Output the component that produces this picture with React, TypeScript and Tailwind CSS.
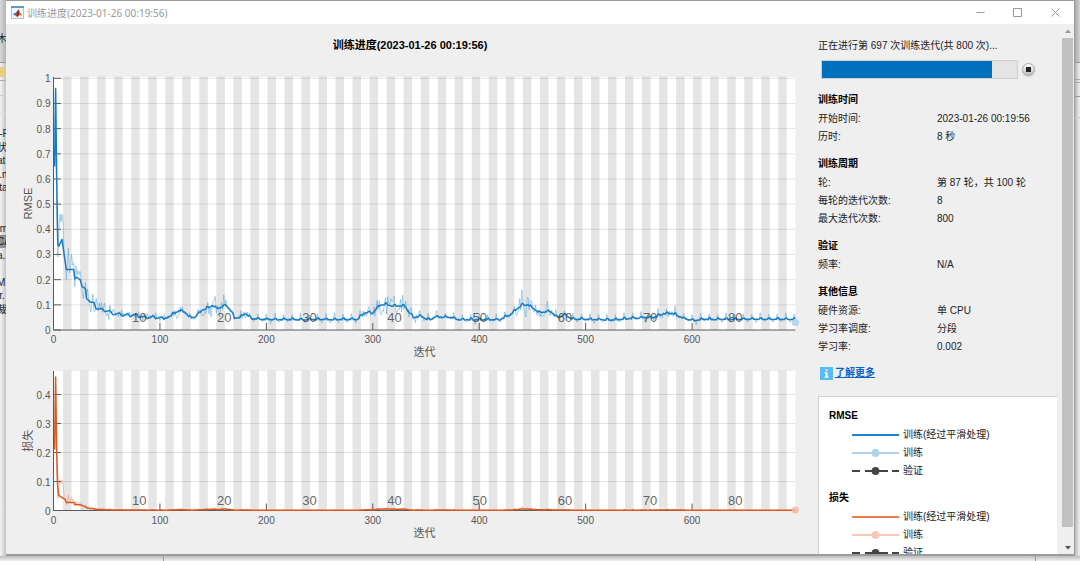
import React from 'react'

const FONT = 'font-["Liberation_Sans","Noto_Sans_CJK_SC",sans-serif]'

const ITERATIONS = 697
const MAX_ITERATIONS = 800
const EPOCH_SIZE = 8

type Key = [number, number]

// [iteration, smoothed RMSE]
const rmseKeys: Key[] = [
  [1, 0.65], [2, 0.96], [3, 0.6], [4, 0.34], [5, 0.333], [8, 0.36], [12, 0.24], [19, 0.24],
  [20, 0.203], [22, 0.21], [25, 0.2], [27, 0.172], [30, 0.165], [31, 0.125], [35, 0.11], [38, 0.11],
  [40, 0.083], [46, 0.085], [48, 0.073], [53, 0.077], [56, 0.06], [62, 0.068], [65, 0.055],
  [70, 0.065], [72, 0.053], [78, 0.065], [80, 0.05], [86, 0.055], [88, 0.045], [94, 0.057],
  [96, 0.045], [102, 0.052], [104, 0.042], [110, 0.058], [118, 0.077], [123, 0.072], [129, 0.048],
  [133, 0.052], [140, 0.08], [150, 0.098], [153, 0.084], [158, 0.092], [162, 0.099], [167, 0.075],
  [170, 0.047], [175, 0.05], [180, 0.065], [183, 0.058], [186, 0.045], [200, 0.042], [285, 0.042],
  [293, 0.07], [300, 0.068], [307, 0.1], [312, 0.103], [318, 0.095], [330, 0.096], [338, 0.05],
  [345, 0.055], [353, 0.04], [359, 0.052], [374, 0.05], [380, 0.042], [419, 0.041], [429, 0.06],
  [440, 0.1], [446, 0.1], [456, 0.07], [467, 0.074], [473, 0.05], [481, 0.06], [487, 0.044],
  [524, 0.04], [548, 0.048], [564, 0.05], [573, 0.065], [582, 0.067], [592, 0.046], [601, 0.038],
  [612, 0.043], [697, 0.043],
]

// [iteration, smoothed loss] for the first steps, later ones follow from the RMSE
const lossKeys: Key[] = [
  [1, 0.21], [2, 0.46], [3, 0.2], [4, 0.08], [5, 0.052], [8, 0.045], [11, 0.038], [12, 0.028],
  [19, 0.028], [20, 0.021], [26, 0.019], [30, 0.013], [32, 0.008], [38, 0.006], [40, 0.003],
]

const earlyRaw: Record<number, number> = {
  1: 0.65, 2: 0.96, 3: 0.5, 4: 0.29, 5: 0.38, 6: 0.46, 7: 0.43, 8: 0.46, 9: 0.43, 10: 0.3, 14: 0.325,
  17: 0.3, 21: 0.255,
}

function noise(n: number) {
  const s = Math.sin(n * 127.1 + 31.7) * 43758.5453
  return (s - Math.floor(s)) * 2 - 1
}

function interpolate(keys: Key[], iteration: number) {
  for (let k = 1; k < keys.length; k++) {
    const [x1, y1] = keys[k]
    if (iteration <= x1) {
      const [x0, y0] = keys[k - 1]
      return y0 + ((y1 - y0) * (iteration - x0)) / (x1 - x0)
    }
  }
  return keys[keys.length - 1][1]
}

const smoothed: number[] = []
const raw: number[] = []
for (let i = 1; i <= ITERATIONS; i++) {
  const base = interpolate(rmseKeys, i)
  const phase = i % EPOCH_SIZE
  const ripple = i > 104 ? (phase < 2 ? 0.005 : -0.001) + noise(i) * 0.0015 : 0
  smoothed.push(base + ripple)
  const spread = Math.min(0.04, Math.max(0.004, (base - 0.04) * 0.65))
  const spike = phase === 0 ? 0.022 : phase === 4 ? -0.01 + noise(i * 5) * 0.008 : 0
  raw.push(earlyRaw[i] ?? Math.max(0.015, base + noise(i * 3) * spread + spike))
}

const toLoss = (v: number) => (v * v) / 2
const smoothedLoss = smoothed.map((v, i) => (i < 40 ? interpolate(lossKeys, i + 1) : toLoss(v)))

type ChartProps = {
  label: string
  height: number
  top: number
  bottom: number
  unit: number
  yTicks: number[]
  line: number[]
  rawLine: number[]
  color: string
  rawColor: string
  dotColor: string
  dotY: number
  epochY: number
}

const LEFT = 47.5
const STEP = 1.0643
const RIGHT = LEFT + ITERATIONS * STEP

function Chart(props: ChartProps) {
  const { label, height, top, bottom, unit, yTicks, line, rawLine, color, rawColor, dotColor, dotY, epochY } = props
  const points = (values: number[]) =>
    values.map((v, i) => `${(LEFT + (i + 1) * STEP).toFixed(1)},${(bottom - v * unit).toFixed(1)}`).join(' ')
  const middle = (top + bottom) / 2

  return (
    <svg viewBox={`0 0 812 ${height}`} className="block h-auto w-full" role="img" aria-label={label}>
      <rect x={LEFT} y={top} width={RIGHT - LEFT} height={bottom - top} fill="#fff" />
      {Array.from({ length: 43 }, (_, k) => (
        <rect key={k} x={LEFT + (9 + 16 * k) * STEP} y={top - 1} width={8.5} height={bottom - top + 1} fill="#e5e5e5" />
      ))}
      {yTicks.filter((t) => t > 0).map((t) => (
        <line key={t} x1={LEFT} x2={RIGHT} y1={bottom - t * unit} y2={bottom - t * unit} stroke="#262626" strokeOpacity={0.12} />
      ))}
      <polyline points={points(rawLine)} fill="none" stroke={rawColor} strokeOpacity={0.5} strokeWidth={1} />
      <g stroke="#5a5a5a" strokeWidth={1}>
        <line x1={LEFT} x2={LEFT} y1={top} y2={bottom} />
        <line x1={LEFT} x2={RIGHT} y1={bottom} y2={bottom} />
        {yTicks.map((t) => (
          <line key={t} x1={LEFT} x2={LEFT + 7.5} y1={bottom - t * unit} y2={bottom - t * unit} />
        ))}
        {[100, 200, 300, 400, 500, 600].map((t) => (
          <line key={t} x1={LEFT + t * STEP} x2={LEFT + t * STEP} y1={bottom} y2={bottom - 7} />
        ))}
      </g>
      <polyline points={points(line)} fill="none" stroke={color} strokeWidth={1.5} strokeLinejoin="round" />
      <circle cx={RIGHT} cy={dotY} r={3.5} fill={dotColor} fillOpacity={0.85} />
      <g fill="#404040" fillOpacity={0.8} fontSize={13} textAnchor="middle">
        {[10, 20, 30, 40, 50, 60, 70, 80].map((e) => (
          <text key={e} x={LEFT + (e * EPOCH_SIZE + 0.5) * STEP} y={epochY}>{e}</text>
        ))}
      </g>
      <g fill="#555" fontSize={10} textAnchor="end">
        {yTicks.map((t) => (
          <text key={t} x={LEFT - 3} y={bottom - t * unit + 4}>{t}</text>
        ))}
      </g>
      <g fill="#555" fontSize={10} textAnchor="middle">
        {[0, 100, 200, 300, 400, 500, 600].map((t) => (
          <text key={t} x={LEFT + t * STEP} y={bottom + 13}>{t}</text>
        ))}
      </g>
      <g fill="#555" fontSize={11} textAnchor="middle">
        <text x={(LEFT + RIGHT) / 2} y={bottom + 26}>迭代</text>
        <text transform={`translate(26 ${middle}) rotate(-90)`}>{label}</text>
      </g>
    </svg>
  )
}

const sections = [
  { title: '训练时间', rows: [['开始时间:', '2023-01-26 00:19:56'], ['历时:', '8 秒']] },
  { title: '训练周期', rows: [['轮:', '第 87 轮，共 100 轮'], ['每轮的迭代次数:', '8'], ['最大迭代次数:', '800']] },
  { title: '验证', rows: [['频率:', 'N/A']] },
  { title: '其他信息', rows: [['硬件资源:', '单 CPU'], ['学习率调度:', '分段'], ['学习率:', '0.002']] },
]

const legends = [
  { title: 'RMSE', color: '#1a84cf', light: '#add3ed' },
  { title: '损失', color: '#e67e50', light: '#f6c9b8' },
]

function LegendRow({ color, text, dot, dashed }: { color: string; text: string; dot?: boolean; dashed?: boolean }) {
  return (
    <li className="flex h-[18px] items-center gap-1 pl-[23px] whitespace-nowrap">
      <svg width="47" height="8" viewBox="0 0 47 8" aria-hidden="true">
        <line x1="0" x2="47" y1="4" y2="4" stroke={color} strokeWidth="2" strokeDasharray={dashed ? '8 5 23 4 7' : undefined} />
        {dot && <circle cx="23.5" cy="4" r="3.9" fill={color} />}
      </svg>
      <span>{text}</span>
    </li>
  )
}

function MatlabIcon() {
  return (
    <svg width="13" height="13" viewBox="0 0 13 13" aria-hidden="true">
      <rect x="0.5" y="0.5" width="12" height="12" fill="#f3f5f7" stroke="#b9c2cb" />
      <rect x="0" y="0" width="13" height="2" fill="#5b9cc9" />
      <path d="M1.5 8.3 4.6 6.8 7.3 3.4 6.3 8.3 4.2 9.6Z" fill="#3a78a8" />
      <path d="M4.2 9.6 6 7.5 7.3 3.2 8.6 5.5 11.3 10.2 9 8.8 6.4 11Z" fill="#d9541e" />
      <path d="M7.3 3.2 8 7.6 6.4 11 5.6 9.2Z" fill="#8c2415" />
    </svg>
  )
}

function TitleBar() {
  return (
    <header className="flex h-[23px] shrink-0 items-center bg-white pl-[5px] text-[#999]">
      <MatlabIcon />
      <span className='ml-[3px] flex-1 font-["Noto_Sans","Noto_Sans_CJK_SC",sans-serif] text-[10px] leading-4'>
        训练进度(2023-01-26 00:19:56)
      </span>
      <div className="flex">
        <button type="button" aria-label="最小化" className="flex h-5 w-[37px] items-center justify-center">
          <svg width="9" height="9" viewBox="0 0 9 9" stroke="currentColor"><path d="M0.5 4.5h8" /></svg>
        </button>
        <button type="button" aria-label="最大化" className="flex h-5 w-[37px] items-center justify-center">
          <svg width="9" height="9" viewBox="0 0 9 9" fill="none" stroke="currentColor"><path d="M0.5 0.5h8v8h-8z" /></svg>
        </button>
        <button type="button" aria-label="关闭" className="flex h-5 w-[38px] items-center justify-center">
          <svg width="9" height="9" viewBox="0 0 9 9" stroke="currentColor"><path d="M0.5 0.5l8 8M8.5 0.5l-8 8" /></svg>
        </button>
      </div>
    </header>
  )
}

function InfoPanel() {
  return (
    <aside className="w-[239px] shrink-0 overflow-hidden pt-[13px] text-[10px] leading-[18px] text-[#222]">
      <p>
        <label htmlFor="progress">正在进行第 {ITERATIONS} 次训练迭代(共 {MAX_ITERATIONS} 次)...</label>
      </p>
      <div className="mt-[5px] flex items-center gap-1 pl-[3px]">
        <div
          id="progress"
          role="progressbar"
          aria-label="训练进度"
          aria-valuemax={MAX_ITERATIONS}
          aria-valuenow={ITERATIONS}
          className="h-[19px] w-[197px] border border-[#cfcfcf] bg-[#e4e4e4]"
        >
          <div className="h-full bg-[#0072bd]" style={{ width: `${(ITERATIONS / MAX_ITERATIONS) * 100}%` }} />
        </div>
        <button
          type="button"
          aria-label="停止"
          className="flex size-[13px] items-center justify-center rounded-full border border-[#aaa] bg-linear-to-b from-white to-[#bbb] shadow-sm"
        >
          <span className="size-[5px] bg-[#222]" />
        </button>
      </div>
      <div className="mt-3 flex flex-col gap-[9px]">
        {sections.map((section) => (
          <section key={section.title}>
            <h2 className="h-[19px] font-bold text-black">{section.title}</h2>
            <dl className="grid grid-cols-[119px_1fr]">
              {section.rows.map(([name, value]) => (
                <React.Fragment key={name}>
                  <dt>{name}</dt>
                  <dd>{value}</dd>
                </React.Fragment>
              ))}
            </dl>
          </section>
        ))}
      </div>
      <a href="#more" className="mt-2 ml-0.5 flex items-center gap-0.5 font-bold text-[#0c63c8]">
        <svg width="13" height="13" viewBox="0 0 13 13" aria-hidden="true">
          <rect width="13" height="13" fill="#58bbf5" />
          <path d="M5.5 2.5h2v1.6h-2zM4.6 5.3h2.9v4.2h1.1v1.2h-4V9.500h1.1V6.500H4.600z" fill="#fff" />
        </svg>
        <span className="underline">了解更多</span>
      </a>
      <div className="mt-[14px] border-t border-l border-[#cfcfcf] bg-white pt-[9px] pb-4 pl-2.5">
        {legends.map((legend) => (
          <section key={legend.title} className="mb-2">
            <h2 className="h-5 leading-5 font-bold text-black">{legend.title}</h2>
            <ul>
              <LegendRow color={legend.color} text="训练(经过平滑处理)" />
              <LegendRow color={legend.light} text="训练" dot />
              <LegendRow color="#444" text="验证" dot dashed />
            </ul>
          </section>
        ))}
      </div>
    </aside>
  )
}

function ScrollBar() {
  return (
    <div className="ml-[5px] flex w-[11px] shrink-0 flex-col" aria-hidden="true">
      <div className="flex h-3.5 items-center justify-center">
        <svg width="6" height="4" viewBox="0 0 6 4"><path d="M0 4 3 0.500 6 4z" fill="#999" /></svg>
      </div>
      <div className="flex-1">
        <div className="h-[97%] bg-[#c1c1c1]" />
      </div>
      <div className="flex h-3 items-center justify-center">
        <svg width="6" height="4" viewBox="0 0 6 4"><path d="M0 0 3 3.500 6 0z" fill="#505050" /></svg>
      </div>
    </div>
  )
}

const behind = ['i-F', '状', 'at', 'i.m', 'ita', '', '', 'tm', 'CA', 'a.', '', 'M', 'ir.', '裁']

// Slice of the window that lies underneath, left of the training window
function LeftStrip() {
  return (
    <div className="flex w-1.5 shrink-0 flex-col overflow-hidden bg-linear-to-r from-[#f4f4f4] to-[#c4c4c4] -indent-[3px] text-[10px] leading-[13px] whitespace-nowrap text-[#222]">
      <div className="h-[63px] border-b border-[#999] bg-linear-to-r from-[#d8d8d8] to-[#b4b4b4] pt-8">木</div>
      <div className="mt-1 h-2.5 w-full bg-[#e8cf80]" />
      <div className="mt-[3px] border-t border-[#aaa]" />
      <div className="mt-[14px] border-t border-[#ccc]" />
      <div className="mt-[17px] border-t border-[#ddd]" />
      <div className="mt-[13px] flex h-[189px] flex-col justify-between">
        {behind.map((text, i) => (
          <div key={i} className={text === 'CA' ? 'h-[13px] shrink-0 bg-[#8f8f8f]' : 'h-[13px] shrink-0'}>{text}</div>
        ))}
      </div>
    </div>
  )
}

function RightStrip() {
  return (
    <div className="w-[5px] shrink-0 bg-linear-to-r from-[#b8b8b8] to-[#f2f2f2]">
      <div className="h-[63px] border-b border-[#999] bg-linear-to-r from-[#a9a9a9] to-[#d4d4d4]" />
      <div className="mt-4 h-1 border-y border-[#aaa]" />
      <div className="mt-[13px] border-t border-[#999]" />
      <div className="mt-5 border-t border-[#ccc]" />
    </div>
  )
}

export default function App() {
  return (
    <div className={`flex h-screen min-h-[561px] flex-col overflow-hidden bg-[#e4e4e4] ${FONT}`}>
      <div className="flex min-h-0 flex-1">
        <LeftStrip />
        <div className="flex min-w-0 flex-1 flex-col border-t border-r border-b-2 border-[#9c9c9c] bg-[#efefef]">
          <TitleBar />
          <div className="flex min-h-0 flex-1 overflow-hidden">
            <main className="min-w-0 flex-1">
              <h1 className="h-10 pr-1 text-center text-[11px] leading-[42px] font-bold text-black">训练进度(2023-01-26 00:19:56)</h1>
              <Chart
                label="RMSE"
                height={300}
                top={13}
                bottom={266}
                unit={251.7}
                yTicks={[0, 0.1, 0.2, 0.3, 0.4, 0.5, 0.6, 0.7, 0.8, 0.9, 1]}
                line={smoothed}
                rawLine={raw}
                color="#187cc4"
                rawColor="#4da3da"
                dotColor="#a8d0ec"
                dotY={258.5}
                epochY={258}
              />
              <Chart
                label="损失"
                height={190}
                top={7}
                bottom={146.5}
                unit={290}
                yTicks={[0, 0.1, 0.2, 0.3, 0.4]}
                line={smoothedLoss}
                rawLine={raw.map(toLoss)}
                color="#dd5a22"
                rawColor="#ee8f60"
                dotColor="#f5b9a0"
                dotY={146}
                epochY={141}
              />
            </main>
            <InfoPanel />
            <ScrollBar />
            <div className="w-px shrink-0" />
          </div>
        </div>
        <RightStrip />
      </div>
      <div className="flex h-[5px] shrink-0 bg-linear-to-b from-[#bcbcbc] to-[#f0f0f0]">
        <div className="w-[164px] border-r border-[#999]" />
        <div className="mr-11 flex-1 border-r border-[#999]" />
      </div>
    </div>
  )
}
